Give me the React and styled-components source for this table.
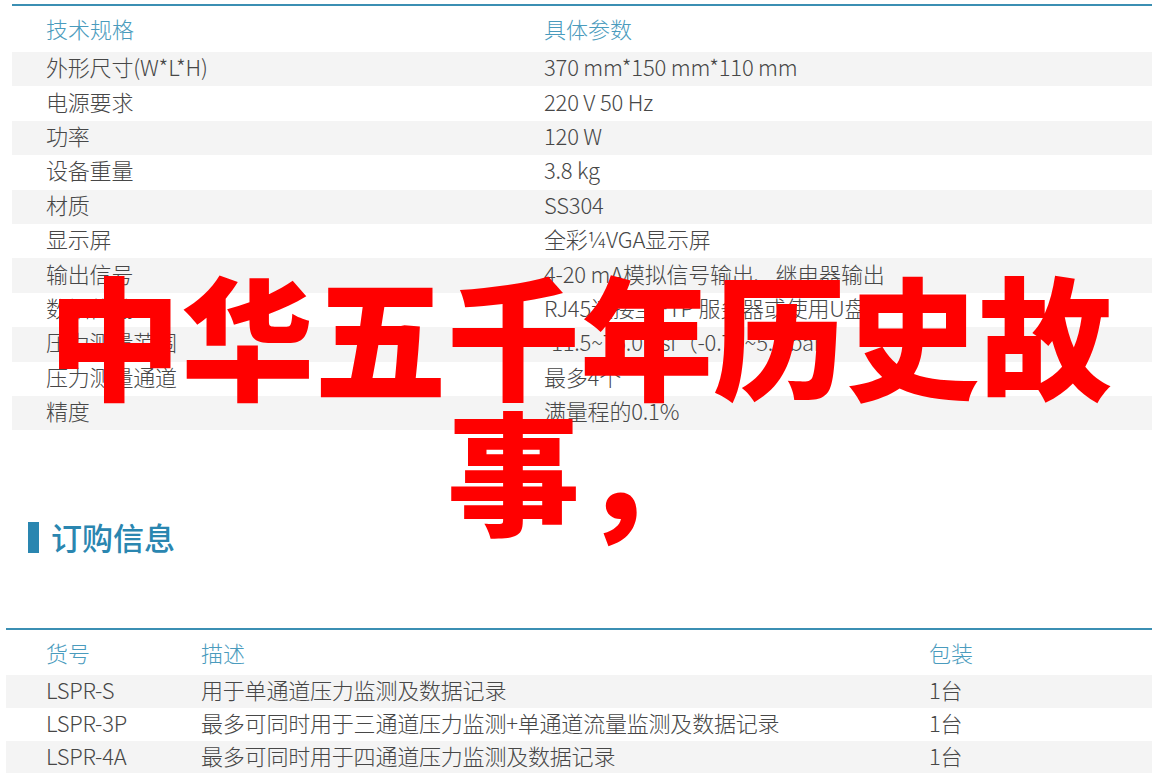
import styled, { createGlobalStyle } from "styled-components";

const GlobalStyle = createGlobalStyle`
  html, body {
    margin: 0;
    padding: 0;
    background: #ffffff;
  }
  body {
    font-family: "Noto Sans CJK SC", "Noto Sans", sans-serif;
    color: #4a4a4a;
  }
`;

const specs = [
  ["外形尺寸(W*L*H)", "370 mm*150 mm*110 mm"],
  ["电源要求", "220 V 50 Hz"],
  ["功率", "120 W"],
  ["设备重量", "3.8 kg"],
  ["材质", "SS304"],
  ["显示屏", "全彩¼VGA显示屏"],
  ["输出信号", "4-20 mA模拟信号输出、继电器输出"],
  ["数据传输", "RJ45连接至FTP 服务器或使用U盘"],
  ["压力测量范围", "-11.5~75.0 psi（-0.79~5.2 bar）"],
  ["压力测量通道", "最多4个"],
  ["精度", "满量程的0.1%"],
];

const orders = [
  ["LSPR-S", "用于单通道压力监测及数据记录", "1台"],
  ["LSPR-3P", "最多可同时用于三通道压力监测+单通道流量监测及数据记录", "1台"],
  ["LSPR-4A", "最多可同时用于四通道压力监测及数据记录", "1台"],
];

export default function App() {
  return (
    <Page>
      <GlobalStyle />
      <SpecTable>
        <HeadRow $cols="498px 1fr" $h={46} $pad={34}>
          <HeadCell>技术规格</HeadCell>
          <HeadCell>具体参数</HeadCell>
        </HeadRow>
        {specs.map(([name, value], i) => (
          <Row key={name} $cols="498px 1fr" $striped={i % 2 === 0} $h={34.4} $pad={34}>
            <Cell>{name}</Cell>
            <Cell>{value}</Cell>
          </Row>
        ))}
      </SpecTable>

      <SectionTitle>
        <TitleBar />
        订购信息
      </SectionTitle>

      <OrderTable>
        <HeadRow $cols="155px 728px 1fr" $h={45} $pad={40}>
          <HeadCell>货号</HeadCell>
          <HeadCell>描述</HeadCell>
          <HeadCell>包装</HeadCell>
        </HeadRow>
        {orders.map(([code, desc, pack], i) => (
          <Row key={code} $cols="155px 728px 1fr" $striped={i % 2 === 0} $h={32.7} $pad={40}>
            <Cell>{code}</Cell>
            <Cell>{desc}</Cell>
            <Cell>{pack}</Cell>
          </Row>
        ))}
      </OrderTable>

      <Overlay>中华五千年历史故事，</Overlay>
    </Page>
  );
}

const Page = styled.div`
  position: relative;
  width: 1155px;
  height: 780px;
  overflow: hidden;
  padding-top: 4px;
  box-sizing: border-box;
`;

const SpecTable = styled.div`
  margin: 0 3px 0 12px;
  border-top: 2px solid #3b8fb3;
`;

const OrderTable = styled.div`
  margin: 0 3px 0 6px;
  border-top: 2px solid #3b8fb3;
`;

const HeadRow = styled.div`
  display: grid;
  grid-template-columns: ${(p) => p.$cols};
  align-items: center;
  height: ${(p) => p.$h}px;
  padding-left: ${(p) => p.$pad}px;
  padding-bottom: 2px;
  box-sizing: border-box;
`;

const Row = styled.div`
  display: grid;
  grid-template-columns: ${(p) => p.$cols};
  align-items: center;
  height: ${(p) => p.$h}px;
  padding-left: ${(p) => p.$pad}px;
  padding-bottom: 6px;
  box-sizing: border-box;
  background: ${(p) => (p.$striped ? "#f4f4f4" : "#ffffff")};
`;

const HeadCell = styled.div`
  font-size: 22px;
  font-weight: 300;
  line-height: 28px;
  color: #4a9bbd;
  white-space: nowrap;
`;

const Cell = styled.div`
  font-size: 22px;
  font-weight: 300;
  line-height: 28px;
  color: #474747;
  white-space: nowrap;
  letter-spacing: -0.2px;
`;

const SectionTitle = styled.h2`
  display: flex;
  align-items: center;
  gap: 12px;
  margin: 89px 0 73px 28px;
  font-size: 31px;
  font-weight: 500;
  color: #2a86b0;
  line-height: 36px;
`;

const TitleBar = styled.span`
  width: 11px;
  height: 31px;
  background: #2a86b0;
`;

const Overlay = styled.div`
  position: absolute;
  left: -20px;
  top: 265px;
  width: 1200px;
  font-size: 133px;
  font-weight: 900;
  line-height: 135px;
  color: #ff0000;
  text-align: center;
  font-family: "Noto Sans CJK SC", sans-serif;
`;
